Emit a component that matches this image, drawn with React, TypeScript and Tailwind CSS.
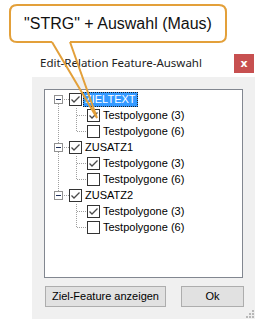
import React from "react";

const Check = () => (
  <svg width="11" height="11" viewBox="0 0 11 11" className="block">
    <path d="M1.5 5.5 L4 8 L9.5 2.5" fill="none" stroke="#4a4a4a" strokeWidth="1.3" />
  </svg>
);

const Box = ({ checked }: { checked: boolean }) => (
  <div className="w-[13px] h-[13px] border border-[#333] bg-white flex items-center justify-center shrink-0">
    {checked && <Check />}
  </div>
);

const Expander = () => (
  <div className="relative w-[9px] h-[9px] border border-[#919191] bg-white shrink-0 flex items-center justify-center">
    <div className="w-[5px] h-[1px] bg-[#1e2f5a]" />
  </div>
);

type Row = { level: 0 | 1; label: string; checked: boolean; selected?: boolean };

const rows: Row[] = [
  { level: 0, label: "ZIELTEXT", checked: true, selected: true },
  { level: 1, label: "Testpolygone (3)", checked: true },
  { level: 1, label: "Testpolygone (6)", checked: false },
  { level: 0, label: "ZUSATZ1", checked: true },
  { level: 1, label: "Testpolygone (3)", checked: true },
  { level: 1, label: "Testpolygone (6)", checked: false },
  { level: 0, label: "ZUSATZ2", checked: true },
  { level: 1, label: "Testpolygone (3)", checked: true },
  { level: 1, label: "Testpolygone (6)", checked: false },
];

const dot = "#a0a0a0";

export default function App() {
  const cy = (i: number) => 9 + 16 * i + 0.5;
  return (
    <div className="relative w-[260px] h-[324px] bg-white overflow-hidden" style={{ fontFamily: '"Liberation Sans", Arial, sans-serif' }}>
      <div className="pt-[54px] pl-[32px] w-[255px]">
        <div className="flex h-[23px] items-start">
          <div className="flex-1 pl-[8px] pt-[1px] leading-[16px] text-[11.5px] text-[#222]" style={{ fontFamily: '"Noto Sans", sans-serif' }}>
            Edit-Relation Feature-Auswahl
          </div>
          <div className="w-[20px] h-[19px] mr-[1px] bg-[#c75050] text-white flex items-center justify-center text-[11px] font-bold leading-none" style={{ fontFamily: '"DejaVu Sans", sans-serif' }}>
            x
          </div>
        </div>
        <div className="relative bg-[#f0f0f0] h-[242px] pt-[12px] pl-[12px]">
          <div className="relative w-[199px] h-[189px] border border-[#828790] bg-white pt-[1px]">
            <svg className="absolute left-0 top-0" width="197" height="187" shapeRendering="crispEdges">
              <line x1="13.5" y1={cy(0)} x2="13.5" y2={cy(6)} stroke={dot} strokeDasharray="1 1" />
              {[0, 3, 6].map((p) => (
                <g key={p}>
                  <line x1="13" y1={cy(p)} x2="24" y2={cy(p)} stroke={dot} strokeDasharray="1 1" />
                  <line x1="31.5" y1={cy(p) + 8} x2="31.5" y2={cy(p + 2)} stroke={dot} strokeDasharray="1 1" />
                  <line x1="32" y1={cy(p + 1)} x2="42" y2={cy(p + 1)} stroke={dot} strokeDasharray="1 1" />
                  <line x1="32" y1={cy(p + 2)} x2="42" y2={cy(p + 2)} stroke={dot} strokeDasharray="1 1" />
                </g>
              ))}
            </svg>
            {rows.map((r, i) => (
              <div key={i} className="relative flex items-center h-[16px] text-[11px] text-black">
                {r.level === 0 ? (
                  <>
                    <div className="ml-[9px]">
                      <Expander />
                    </div>
                    <div className="ml-[6px]">
                      <Box checked={r.checked} />
                    </div>
                  </>
                ) : (
                  <div className="ml-[42px]">
                    <Box checked={r.checked} />
                  </div>
                )}
                <div
                  className={
                    r.selected
                      ? "ml-[1px] px-[1px] h-[15px] leading-[13px] bg-[#3399ff] text-white border border-dotted border-[#222]"
                      : "ml-[1px] px-[2px] h-[15px] leading-[15px]"
                  }
                >
                  {r.label}
                </div>
              </div>
            ))}
          </div>
          <div className="flex mt-[8px] ml-[1px] gap-[15px]">
            <div className="w-[121px] h-[21px] border border-[#adadad] bg-[#e1e1e1] flex items-center justify-center text-[11px] text-black">
              Ziel-Feature anzeigen
            </div>
            <div className="w-[63px] h-[21px] border border-[#adadad] bg-[#e1e1e1] flex items-center justify-center text-[11px] text-black">
              Ok
            </div>
          </div>
          <svg className="absolute right-[1px] bottom-[1px]" width="8" height="8" shapeRendering="crispEdges">
            <rect x="6" y="0" width="2" height="2" fill="#b8b8b8" />
            <rect x="3" y="3" width="2" height="2" fill="#b8b8b8" />
            <rect x="6" y="3" width="2" height="2" fill="#b8b8b8" />
            <rect x="0" y="6" width="2" height="2" fill="#b8b8b8" />
            <rect x="3" y="6" width="2" height="2" fill="#b8b8b8" />
            <rect x="6" y="6" width="2" height="2" fill="#b8b8b8" />
          </svg>
        </div>
      </div>
      <svg className="absolute left-0 top-0 pointer-events-none" width="260" height="324">
        <path
          d="M52 42 L17 42 Q10 42 10 35 L10 12 Q10 5 17 5 L219 5 Q226 5 226 12 L226 35 Q226 42 219 42 L70 42"
          fill="white"
          stroke="#e3a03a"
          strokeWidth="2"
        />
        <path d="M52 42 L97 118 L70 42" fill="none" stroke="#e3a03a" strokeWidth="2" strokeLinejoin="miter" />
      </svg>
      <div className="absolute left-[10px] top-[5px] w-[216px] h-[37px] flex items-center justify-center text-[16px] text-[#111]" style={{ fontFamily: '"Liberation Sans", Arial, sans-serif' }}>
        "STRG" + Auswahl (Maus)
      </div>
    </div>
  );
}
